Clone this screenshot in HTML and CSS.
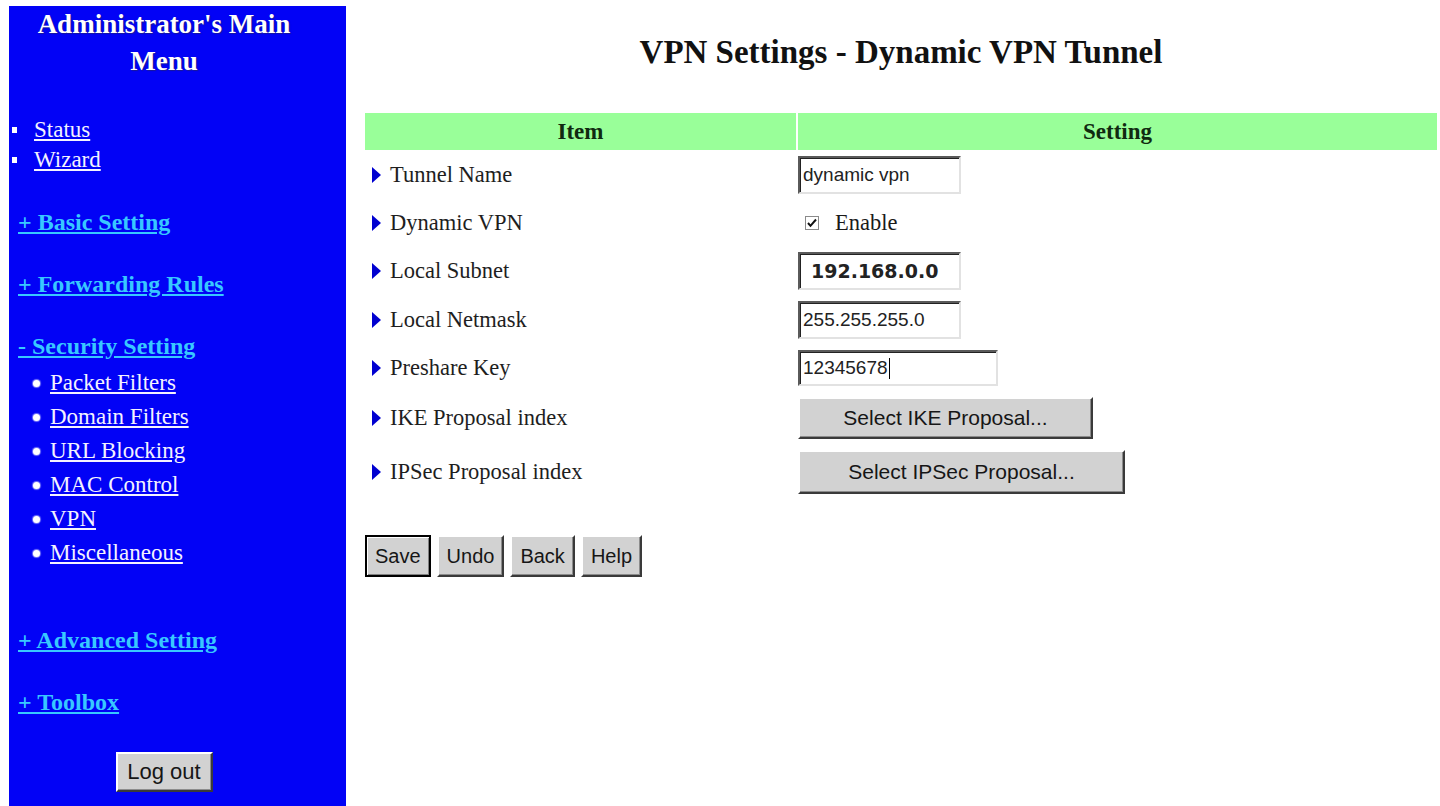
FILE: index.html
```html
<!DOCTYPE html>
<html lang="en">
<head>
<meta charset="utf-8">
<title>VPN Settings - Dynamic VPN Tunnel</title>
<link rel="stylesheet" href="styles.css">
</head>
<body>
<div class="page">
  <nav class="sidebar">
    <div class="side-inner">
      <h2 class="side-title">Administrator's Main<br>Menu</h2>
      <ul class="top-links">
        <li><a class="link" href="#">Status</a></li>
        <li><a class="link" href="#">Wizard</a></li>
      </ul>
      <a class="section" href="#">+ Basic Setting</a>
      <a class="section" href="#">+ Forwarding Rules</a>
      <a class="section" href="#">- Security Setting</a>
      <ul class="sub-links">
        <li><a class="link" href="#">Packet Filters</a></li>
        <li><a class="link" href="#">Domain Filters</a></li>
        <li><a class="link" href="#">URL Blocking</a></li>
        <li><a class="link" href="#">MAC Control</a></li>
        <li><a class="link" href="#">VPN</a></li>
        <li><a class="link" href="#">Miscellaneous</a></li>
      </ul>
      <a class="section section-adv" href="#">+ Advanced Setting</a>
      <a class="section" href="#">+ Toolbox</a>
      <div class="logout-wrap"><button class="btn logout" type="button">Log out</button></div>
    </div>
  </nav>

  <main class="main">
    <h1 class="title">VPN Settings - Dynamic VPN Tunnel</h1>
    <div class="form-grid">
      <div class="head">Item</div>
      <div class="head">Setting</div>

      <div class="label">Tunnel Name</div>
      <div class="field"><input class="text-in" type="text" value="dynamic vpn"></div>

      <div class="label">Dynamic VPN</div>
      <div class="field field-check">
        <svg class="check" width="14" height="14" viewBox="0 0 14 14">
          <rect x="0.5" y="0.5" width="13" height="13" fill="#fff" stroke="#8a8a8a"/>
          <path d="M3 7 L5.5 9.8 L11 3.5" fill="none" stroke="#111" stroke-width="2"/>
        </svg>
        <span class="check-label">Enable</span>
      </div>

      <div class="label">Local Subnet</div>
      <div class="field"><input class="text-in text-bold" type="text" value="192.168.0.0"></div>

      <div class="label">Local Netmask</div>
      <div class="field"><input class="text-in" type="text" value="255.255.255.0"></div>

      <div class="label">Preshare Key</div>
      <div class="field"><span class="key-wrap"><input class="text-in key-in" type="text" value="12345678"></span></div>

      <div class="label">IKE Proposal index</div>
      <div class="field"><button class="btn select-btn ike" type="button">Select IKE Proposal...</button></div>

      <div class="label">IPSec Proposal index</div>
      <div class="field"><button class="btn select-btn ipsec" type="button">Select IPSec Proposal...</button></div>
    </div>

    <div class="actions">
      <button class="btn act default" type="button">Save</button>
      <button class="btn act" type="button">Undo</button>
      <button class="btn act" type="button">Back</button>
      <button class="btn act" type="button">Help</button>
    </div>
  </main>
</div>
</body>
</html>
```

FILE: styles.css
```css
html, body {
  margin: 0;
  padding: 0;
  background: #ffffff;
}

body {
  font-family: "Liberation Serif", "Times New Roman", serif;
  color: #1a1a1a;
}

.page {
  display: flex;
  gap: 19px;
  padding: 6px 3px 0 9px;
  min-height: 806px;
  box-sizing: border-box;
}

/* ---------- sidebar ---------- */
.sidebar {
  flex: none;
  width: 337px;
  background: #0202f6;
}

.side-inner {
  width: 310px;
}

.side-title {
  margin: 0;
  text-align: center;
  font: bold 27px/37px "Liberation Serif", serif;
  color: #ffffff;
  text-shadow: 1px 1px 1px rgba(40, 40, 90, 0.6);
}

.link {
  font: 23px/30px "Liberation Serif", serif;
  color: #f4f2ff;
  text-decoration: underline;
}

.top-links {
  list-style: none;
  margin: 35px 0 0;
  padding: 0;
}

.top-links li {
  display: flex;
  align-items: center;
  height: 30px;
  padding-left: 3px;
}

.top-links li::before {
  content: "";
  width: 5px;
  height: 6px;
  background: #ffffff;
  margin-right: 17px;
}

.section {
  display: block;
  width: max-content;
  margin-top: 32px;
  padding-left: 9px;
  font: bold 24px/30px "Liberation Serif", serif;
  color: #38c8ff;
  text-decoration: underline;
}

.sub-links {
  list-style: none;
  margin: 5px 0 0;
  padding: 0;
}

.sub-links li {
  display: flex;
  align-items: center;
  height: 34px;
  padding-left: 24px;
}

.sub-links li::before {
  content: "";
  width: 7px;
  height: 7px;
  border-radius: 50%;
  background: #ffffff;
  box-shadow: 0 0 1px 1px rgba(200, 200, 255, 0.6);
  margin-right: 10px;
}

.section-adv {
  margin-top: 55px;
}

.logout-wrap {
  margin-top: 35px;
  text-align: center;
}

/* ---------- buttons ---------- */
.btn {
  font-family: "Liberation Sans", Arial, sans-serif;
  color: #161616;
  background: #d2d2d2;
  border: 2px solid;
  border-color: #ffffff #3a3a3a #3a3a3a #ffffff;
  box-shadow: inset -1px -1px 0 #8c8c8c;
  padding: 0 8px;
  cursor: pointer;
}

.logout {
  width: 97px;
  height: 40px;
  font-size: 22px;
}

/* ---------- main ---------- */
.main {
  flex: 1;
  padding-top: 26px;
}

.title {
  margin: 0 0 41px;
  text-align: center;
  font: bold 33px/40px "Liberation Serif", serif;
  color: #111111;
}

.form-grid {
  display: grid;
  grid-template-columns: 431px 1fr;
  column-gap: 2px;
  row-gap: 1px;
}

.head {
  background: #99ff99;
  text-align: center;
  font: bold 23px/37px "Liberation Serif", serif;
  color: #102a10;
}

.label {
  display: flex;
  align-items: center;
  padding-left: 7px;
  font-size: 22.5px;
  color: #1e1e1e;
}

.label::before {
  content: "";
  width: 0;
  height: 0;
  border-left: 9px solid #0000d0;
  border-top: 8px solid transparent;
  border-bottom: 8px solid transparent;
  margin-right: 9px;
}

.field {
  display: flex;
  align-items: center;
  padding: 5px 0;
}

.field-check {
  padding: 10px 0 10px 7px;
}

.check {
  display: block;
}

.check-label {
  margin-left: 16px;
  font-size: 22.5px;
}

.text-in {
  box-sizing: border-box;
  width: 163px;
  height: 38px;
  margin: 0;
  padding: 0 0 0 3px;
  font: 19px "Liberation Sans", Arial, sans-serif;
  color: #222222;
  background: #ffffff;
  border: 2px solid;
  border-color: #5a5a5a #e2e2e2 #e2e2e2 #5a5a5a;
  box-shadow: inset 1px 1px 0 #222;
  outline: none;
}

.text-bold {
  padding-left: 11px;
  font: bold 19px "DejaVu Sans", Verdana, sans-serif;
}

.key-wrap {
  position: relative;
  display: inline-block;
}

.key-in {
  width: 200px;
  height: 36px;
}

.key-wrap::after {
  content: "";
  position: absolute;
  left: 91px;
  top: 8px;
  width: 1px;
  height: 21px;
  background: #000;
}

.select-btn {
  font-size: 21px;
}

.ike {
  width: 295px;
  height: 42px;
}

.ipsec {
  width: 327px;
  height: 44px;
}

.actions {
  display: flex;
  gap: 6px;
  margin-top: 36px;
}

.act {
  height: 42px;
  font-size: 20px;
  padding: 0 8px;
}

.default {
  border-color: #000;
  box-shadow: inset 1px 1px 0 #ffffff, inset -1px -1px 0 #808080;
}
```
